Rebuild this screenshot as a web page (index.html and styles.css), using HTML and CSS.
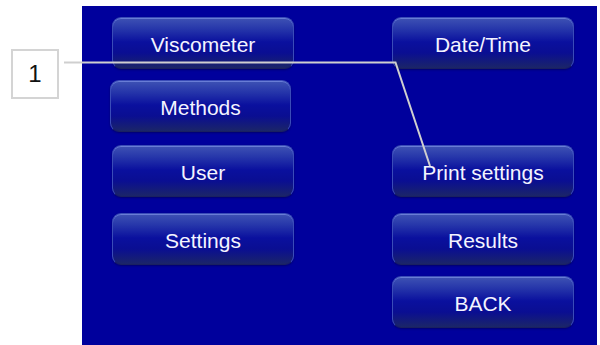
FILE: index.html
```html
<!DOCTYPE html>
<html lang="en">
<head>
  <meta charset="UTF-8" />
  <title>Menu</title>
  <link rel="stylesheet" href="styles.css">
</head>
<body>
  <div class="page">
    <div class="side">
      <div class="callout">1</div>
    </div>
    <div class="panel">
      <div class="col col-left">
        <button class="btn b-visc">Viscometer</button>
        <button class="btn b-methods">Methods</button>
        <button class="btn b-user">User</button>
        <button class="btn b-settings">Settings</button>
      </div>
      <div class="col col-right">
        <button class="btn b-date">Date/Time</button>
        <button class="btn b-print">Print settings</button>
        <button class="btn b-results">Results</button>
        <button class="btn b-back">BACK</button>
      </div>
    </div>
    <svg class="leader" width="600" height="345" viewBox="0 0 600 345">
      <polyline points="64,62.5 395.5,62.5 430,166" fill="none" stroke="#cfcfcf" stroke-width="2" />
    </svg>
  </div>
</body>
</html>
```

FILE: styles.css
```css
* {
  box-sizing: border-box;
}

body {
  margin: 0;
  background: #ffffff;
  font-family: 'Liberation Sans', Arial, sans-serif;
}

.page {
  position: relative;
  display: flex;
  width: 600px;
  height: 345px;
}

.side {
  width: 82px;
  padding: 49px 0 0 11px;
}

.callout {
  width: 48px;
  height: 50px;
  border: 2px solid #d4d4d4;
  display: flex;
  align-items: center;
  justify-content: center;
  font-size: 24px;
  color: #111;
  padding-bottom: 1px;
}

.panel {
  width: 515px;
  margin-top: 6px;
  background: #00009c;
  display: flex;
  padding: 11px 0 0 30px;
}

.col {
  display: flex;
  flex-direction: column;
  width: 182px;
}

.col-right {
  margin-left: 98px;
}

.btn {
  width: 182px;
  height: 52px;
  border-radius: 9px;
  border: 1px solid #3a4cb8;
  border-bottom-color: #1a2060;
  background: linear-gradient(to bottom, #3e52b4 0%, #2636aa 22%, #0a109e 48%, #0a0e92 70%, #1b2568 100%);
  box-shadow: inset 0 1px 0 rgba(160, 180, 255, 0.45), 0 1px 2px rgba(0, 0, 40, 0.4);
  color: #f4f4ff;
  font-family: inherit;
  font-size: 21px;
  padding: 4px 0 0 0;
}

.b-methods {
  margin-top: 11px;
  margin-left: -2px;
  width: 181px;
}

.b-user {
  margin-top: 13px;
}

.b-settings {
  margin-top: 16px;
}

.b-print {
  margin-top: 76px;
}

.b-results {
  margin-top: 16px;
}

.b-back {
  margin-top: 11px;
}

.leader {
  position: absolute;
  left: 0;
  top: 0;
  pointer-events: none;
}
```
